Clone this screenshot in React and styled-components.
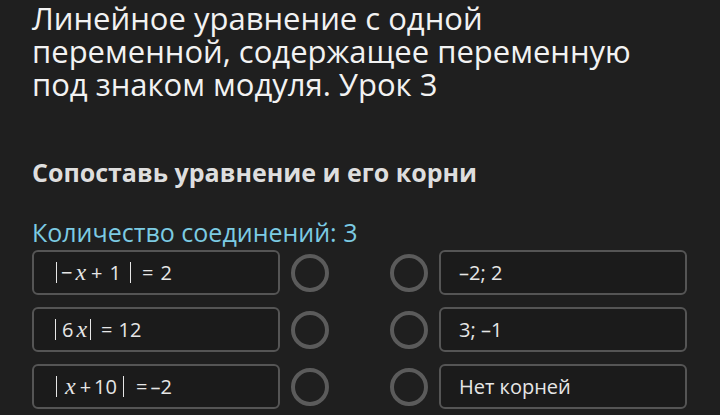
import React from 'react'
import styled, { createGlobalStyle } from 'styled-components'

const Global = createGlobalStyle`
  html, body {
    margin: 0;
    background: #1f1f1f;
  }
  body {
    font-family: "Open Sans", "Noto Sans", sans-serif;
  }
`

const Page = styled.div`
  width: 720px;
  height: 415px;
  overflow: hidden;
  background: #1f1f1f;
  padding: 2px 0 0 32px;
  box-sizing: border-box;
`

const Title = styled.h1`
  margin: 0;
  font-size: 31px;
  line-height: 33px;
  font-weight: 400;
  color: #f2f2f2;
  width: 650px;
`

const Subtitle = styled.h2`
  margin: 56px 0 0;
  font-size: 25px;
  line-height: 30px;
  font-weight: 700;
  color: #dedede;
`

const Counter = styled.div`
  margin-top: 30px;
  font-size: 25px;
  line-height: 30px;
  color: #7ccbe3;
`

const Board = styled.div`
  margin-top: 3px;
  display: grid;
  grid-template-columns: 248px 38px 39px 38px 248px;
  grid-auto-rows: 45px;
  column-gap: 11px;
  row-gap: 12px;
  align-items: center;
`

const Card = styled.div`
  height: 45px;
  box-sizing: border-box;
  border: 2px solid #555;
  border-radius: 6px;
  background: #1b1b1b;
  display: flex;
  align-items: center;
  padding-left: ${p => p.pad || 20}px;
  font-size: 20px;
  color: #e6e6e6;
  white-space: pre;
`

const Dot = styled.div`
  width: 38px;
  height: 38px;
  box-sizing: border-box;
  border-radius: 50%;
  border: 4px solid #5b5b5b;
`

const Gap = styled.div``

const X = styled.span`
  font-family: "Liberation Serif", "DejaVu Serif", serif;
  font-style: italic;
  font-size: 24px;
  margin-left: ${p => p.l || 0}px;
`

const Op = styled.span`
  margin-left: ${p => p.l || 0}px;
`

const Bar = styled.span`
  display: inline-block;
  width: 0;
  height: 21px;
  border-left: 1.5px solid #e6e6e6;
  margin-left: ${p => p.l || 0}px;
  vertical-align: -4px;
`

const rows = [
  [
    <><Bar l={2} /><Op l={4}>−</Op><X l={3}>x</X><Op l={5}>+</Op><Op l={7}>1</Op><Bar l={9} /><Op l={11}>=</Op><Op l={7}>2</Op></>,
    '–2; 2',
  ],
  [
    <><Bar l={1} /><Op l={6}>6</Op><X l={3}>x</X><Bar l={3} /><Op l={10}>=</Op><Op l={6}>12</Op></>,
    '3; –1',
  ],
  [
    <><Bar l={2} /><X l={8}>x</X><Op l={4}>+</Op><Op l={3}>10</Op><Bar l={6} /><Op l={12}>=</Op><Op l={3}>–2</Op></>,
    'Нет корней',
  ],
]

export default function App() {
  return (
    <Page>
      <Global />
      <Title>Линейное уравнение с одной переменной, содержащее переменную под знаком модуля. Урок 3</Title>
      <Subtitle>Сопоставь уравнение и его корни</Subtitle>
      <Counter>Количество соединений: 3</Counter>
      <Board>
        {rows.map(([left, right], i) => (
          <React.Fragment key={i}>
            <Card pad={20}>{left}</Card>
            <Dot />
            <Gap />
            <Dot />
            <Card pad={18}>{right}</Card>
          </React.Fragment>
        ))}
      </Board>
    </Page>
  )
}
